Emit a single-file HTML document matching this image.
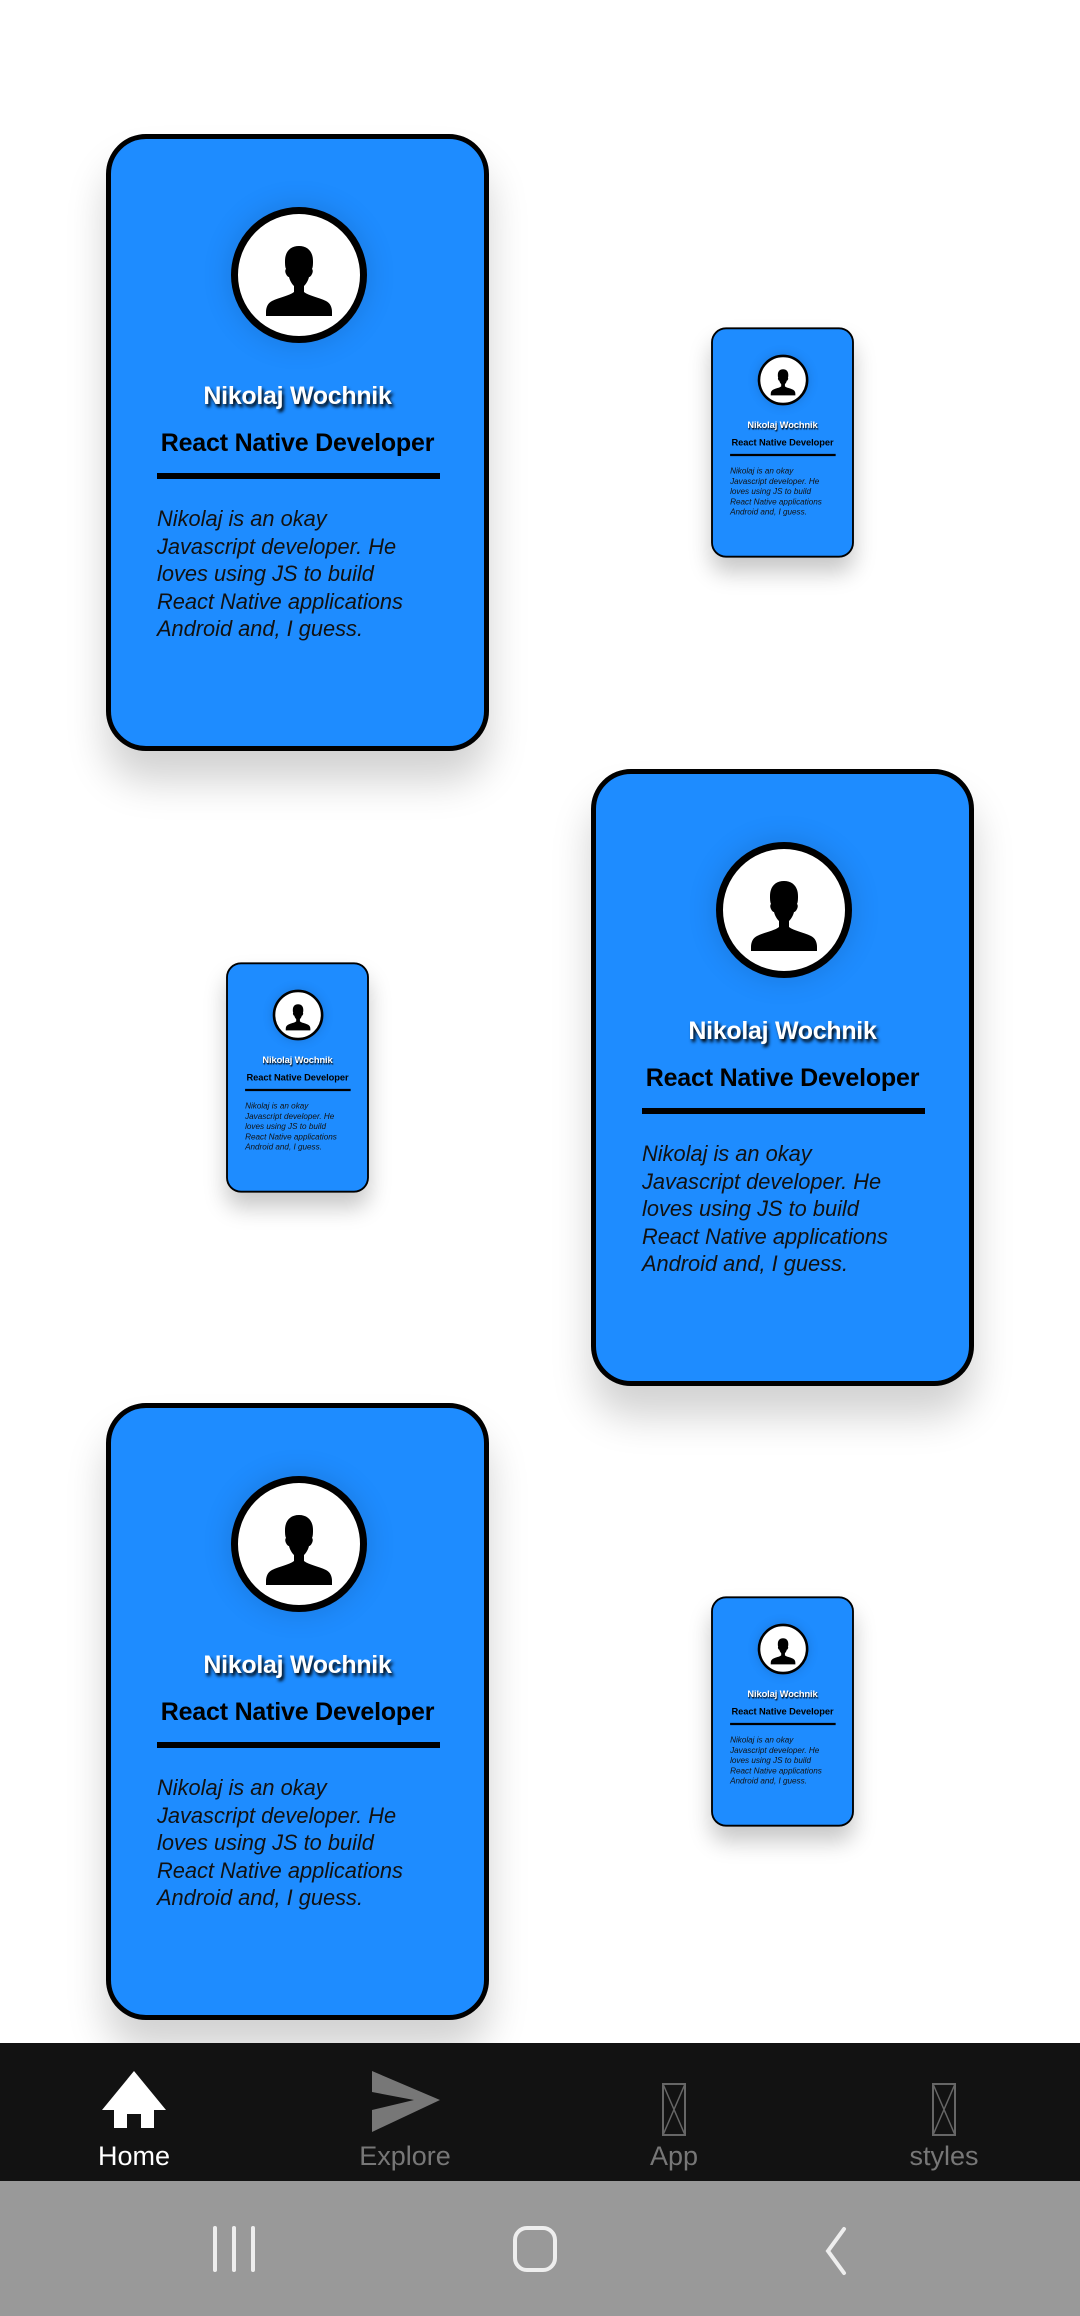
<!DOCTYPE html>
<html><head><meta charset="utf-8"><style>
*{margin:0;padding:0;box-sizing:border-box}
body{width:1080px;height:2316px;background:#fff;position:relative;overflow:hidden;font-family:"Liberation Sans",sans-serif}
.card{position:absolute;width:383px;height:617px;background:#1e8cff;border:5px solid #000;border-radius:40px;box-shadow:0 30px 40px rgba(0,0,0,0.18)}
.sm{transform:scale(0.373);transform-origin:center center;box-shadow:0 40px 60px rgba(0,0,0,0.22)}
.av{position:absolute;left:120px;top:68px;width:136px;height:136px;border-radius:50%;background:#fff;border:7px solid #000;box-shadow:0 0 30px rgba(0,0,0,0.15);overflow:hidden}
.name{position:absolute;left:0;right:0;top:243px;text-align:center;color:#fff;font-weight:bold;font-size:25px;letter-spacing:-0.3px;text-shadow:2px 3px 3px #000}
.title{position:absolute;left:0;right:0;top:290px;text-align:center;color:#000;font-weight:bold;font-size:25px;letter-spacing:-0.2px}
.line{position:absolute;left:46px;width:283px;top:334px;height:6px;background:#000}
.p{position:absolute;left:46px;top:366px;width:320px;font-style:italic;font-size:21.8px;line-height:27.5px;color:#111}
.nav{position:absolute;left:0;top:2043px;width:1080px;height:138px;background:#121212}
.sys{position:absolute;left:0;top:2181px;width:1080px;height:135px;background:#999}
.lbl{position:absolute;top:2141px;width:200px;text-align:center;font-size:27px;color:#777}
</style></head><body>

<div class="card" style="left:106px;top:134px">
 <div class="av"><svg width="122" height="122" viewBox="0 0 122 122"><path d="M61 32c-9 0-14 6-14 15 0 3 0 6 1 8-1 1-1 3 0 5 1 2 2 3 3 3 1 4 3 7 5 9v6c-5 4-14 5-22 9-4 2-6 6-6 11v4h66v-4c0-5-2-9-6-11-8-4-17-5-22-9v-6c2-2 4-5 5-9 1 0 2-1 3-3 1-2 1-4 0-5 1-2 1-5 1-8 0-9-5-15-14-15z" fill="#000"/></svg></div>
 <div class="name">Nikolaj Wochnik</div>
 <div class="title">React Native Developer</div>
 <div class="line"></div>
 <div class="p">Nikolaj is an okay<br>Javascript developer. He<br>loves using JS to build<br>React Native applications<br>Android and, I guess.</div>
</div>

<div class="card sm" style="left:591px;top:134px">
 <div class="av"><svg width="122" height="122" viewBox="0 0 122 122"><path d="M61 32c-9 0-14 6-14 15 0 3 0 6 1 8-1 1-1 3 0 5 1 2 2 3 3 3 1 4 3 7 5 9v6c-5 4-14 5-22 9-4 2-6 6-6 11v4h66v-4c0-5-2-9-6-11-8-4-17-5-22-9v-6c2-2 4-5 5-9 1 0 2-1 3-3 1-2 1-4 0-5 1-2 1-5 1-8 0-9-5-15-14-15z" fill="#000"/></svg></div>
 <div class="name">Nikolaj Wochnik</div>
 <div class="title">React Native Developer</div>
 <div class="line"></div>
 <div class="p">Nikolaj is an okay<br>Javascript developer. He<br>loves using JS to build<br>React Native applications<br>Android and, I guess.</div>
</div>

<div class="card" style="left:591px;top:769px">
 <div class="av"><svg width="122" height="122" viewBox="0 0 122 122"><path d="M61 32c-9 0-14 6-14 15 0 3 0 6 1 8-1 1-1 3 0 5 1 2 2 3 3 3 1 4 3 7 5 9v6c-5 4-14 5-22 9-4 2-6 6-6 11v4h66v-4c0-5-2-9-6-11-8-4-17-5-22-9v-6c2-2 4-5 5-9 1 0 2-1 3-3 1-2 1-4 0-5 1-2 1-5 1-8 0-9-5-15-14-15z" fill="#000"/></svg></div>
 <div class="name">Nikolaj Wochnik</div>
 <div class="title">React Native Developer</div>
 <div class="line"></div>
 <div class="p">Nikolaj is an okay<br>Javascript developer. He<br>loves using JS to build<br>React Native applications<br>Android and, I guess.</div>
</div>

<div class="card sm" style="left:106px;top:769px">
 <div class="av"><svg width="122" height="122" viewBox="0 0 122 122"><path d="M61 32c-9 0-14 6-14 15 0 3 0 6 1 8-1 1-1 3 0 5 1 2 2 3 3 3 1 4 3 7 5 9v6c-5 4-14 5-22 9-4 2-6 6-6 11v4h66v-4c0-5-2-9-6-11-8-4-17-5-22-9v-6c2-2 4-5 5-9 1 0 2-1 3-3 1-2 1-4 0-5 1-2 1-5 1-8 0-9-5-15-14-15z" fill="#000"/></svg></div>
 <div class="name">Nikolaj Wochnik</div>
 <div class="title">React Native Developer</div>
 <div class="line"></div>
 <div class="p">Nikolaj is an okay<br>Javascript developer. He<br>loves using JS to build<br>React Native applications<br>Android and, I guess.</div>
</div>

<div class="card" style="left:106px;top:1403px">
 <div class="av"><svg width="122" height="122" viewBox="0 0 122 122"><path d="M61 32c-9 0-14 6-14 15 0 3 0 6 1 8-1 1-1 3 0 5 1 2 2 3 3 3 1 4 3 7 5 9v6c-5 4-14 5-22 9-4 2-6 6-6 11v4h66v-4c0-5-2-9-6-11-8-4-17-5-22-9v-6c2-2 4-5 5-9 1 0 2-1 3-3 1-2 1-4 0-5 1-2 1-5 1-8 0-9-5-15-14-15z" fill="#000"/></svg></div>
 <div class="name">Nikolaj Wochnik</div>
 <div class="title">React Native Developer</div>
 <div class="line"></div>
 <div class="p">Nikolaj is an okay<br>Javascript developer. He<br>loves using JS to build<br>React Native applications<br>Android and, I guess.</div>
</div>

<div class="card sm" style="left:591px;top:1403px">
 <div class="av"><svg width="122" height="122" viewBox="0 0 122 122"><path d="M61 32c-9 0-14 6-14 15 0 3 0 6 1 8-1 1-1 3 0 5 1 2 2 3 3 3 1 4 3 7 5 9v6c-5 4-14 5-22 9-4 2-6 6-6 11v4h66v-4c0-5-2-9-6-11-8-4-17-5-22-9v-6c2-2 4-5 5-9 1 0 2-1 3-3 1-2 1-4 0-5 1-2 1-5 1-8 0-9-5-15-14-15z" fill="#000"/></svg></div>
 <div class="name">Nikolaj Wochnik</div>
 <div class="title">React Native Developer</div>
 <div class="line"></div>
 <div class="p">Nikolaj is an okay<br>Javascript developer. He<br>loves using JS to build<br>React Native applications<br>Android and, I guess.</div>
</div>

<div class="nav"></div>
<svg style="position:absolute;left:100px;top:2070px" width="68" height="58" viewBox="0 0 68 58"><path d="M34 1L2 40h12v18h13V44h14v14h13V40h12z" fill="#fff"/></svg>
<svg style="position:absolute;left:370px;top:2070px" width="72" height="64" viewBox="0 0 72 64"><path d="M2 1L70 30 2 62V40L44 30 2 22z" fill="#777"/></svg>
<svg style="position:absolute;left:662px;top:2083px" width="24" height="54" viewBox="0 0 24 54"><rect x="1" y="1" width="22" height="51" fill="none" stroke="#666" stroke-width="2"/><path d="M1 1L23 52M23 1L1 52" stroke="#666" stroke-width="1.5"/></svg>
<svg style="position:absolute;left:932px;top:2083px" width="24" height="54" viewBox="0 0 24 54"><rect x="1" y="1" width="22" height="51" fill="none" stroke="#666" stroke-width="2"/><path d="M1 1L23 52M23 1L1 52" stroke="#666" stroke-width="1.5"/></svg>
<div class="lbl" style="left:34px;color:#fff">Home</div>
<div class="lbl" style="left:305px">Explore</div>
<div class="lbl" style="left:574px">App</div>
<div class="lbl" style="left:844px">styles</div>

<div class="sys"></div>
<svg style="position:absolute;left:210px;top:2226px" width="50" height="46" viewBox="0 0 50 46"><path d="M5 2v42M24 2v42M43 2v42" stroke="#eee" stroke-width="4" stroke-linecap="round"/></svg>
<svg style="position:absolute;left:512px;top:2224px" width="50" height="50" viewBox="0 0 50 50"><rect x="3" y="4" width="40" height="42" rx="12" fill="none" stroke="#eee" stroke-width="4"/></svg>
<svg style="position:absolute;left:820px;top:2226px" width="30" height="50" viewBox="0 0 30 50"><path d="M24 3L8 25l16 22" fill="none" stroke="#eee" stroke-width="4" stroke-linecap="round"/></svg>
</body></html>
